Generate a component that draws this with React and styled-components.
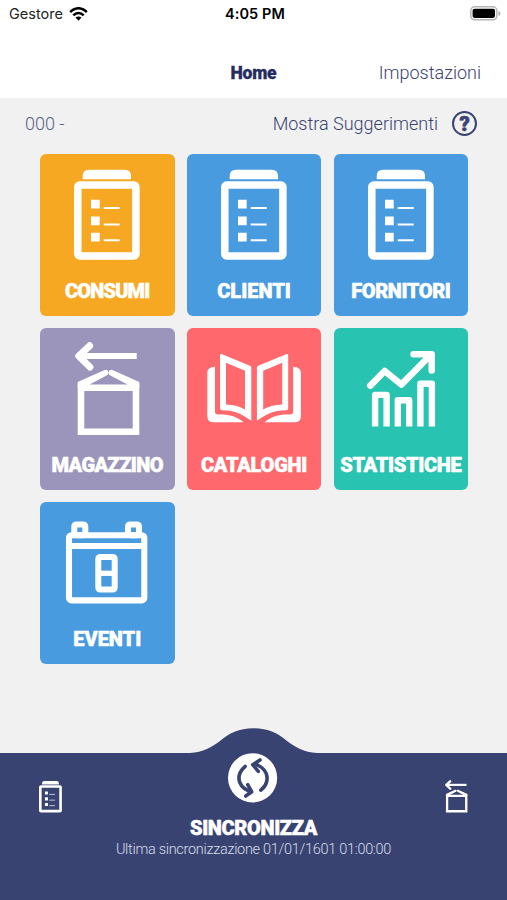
import React from "react";
import styled, { createGlobalStyle } from "styled-components";

const GlobalStyle = createGlobalStyle`
  * {
    box-sizing: border-box;
  }
  body {
    margin: 0;
    background-color: #f1f1f1;
    font-family: Roboto, "Liberation Sans", sans-serif;
  }
`;

const ClipboardIcon = () => (
  <>
    <path d='M42.7 25.3V22q0-6.3 6.3-6.3h35.7q6.3 0 6.3 6.3v3.3z' fill='currentColor' />
    <rect x='37.8' y='31.1' width='58.1' height='70.8' rx='1.8' strokeWidth='7.5' />
    <path d='M51 45.7h8.7v8.7H51zM51 62.4h8.7v8.9H51zM51 78.8h8.7v8.8H51z' fill='currentColor' />
    <path d='M63.7 54h16M63.7 70.5h16M63.7 86.3h16' strokeWidth='2' />
  </>
);

const RoofHalf = () => (
  <path d='M37.7 60V54L64 42.2q3.2-1.2 4.2 1.2t-1.6 4.1L50 56.3V60z' fill='currentColor' />
);

const BoxIcon = () => (
  <>
    <path d='M96.7 28H39' strokeWidth='6.2' />
    <path d='M49.7 17.7L38.7 28L50 39.2' strokeWidth='6.8' strokeLinecap='round' strokeLinejoin='round' />
    <path d='M41 59.7V103.7H96V59.7z' strokeWidth='6.6' />
    <RoofHalf />
    <g transform='translate(137 0) scale(-1 1)'>
      <RoofHalf />
    </g>
  </>
);

const BookHalf = () => (
  <path
    fill='currentColor'
    fillRule='evenodd'
    d='M33 27.5q0-2 2.2-1.3L63 37.8q1.3.6 1.3 2V92.7C55 86.5 49 82.3 35 82.2q-2 0-2-2zM39 34.7V76.6C47 76.7 53 78.6 58 81.5V42.8zM28 38.7q-7.7.6-7.7 6V88q0 6.3 6.3 6.3H56.7C49 87.6 41 86 31 86.5q-3 0-3-3z'
  />
);

const BookIcon = () => (
  <>
    <BookHalf />
    <g transform='translate(134.2 0) scale(-1 1)'>
      <BookHalf />
    </g>
  </>
);

const ChartIcon = () => (
  <>
    <path
      d='M36.3 57.6L50.7 43L67.3 56.6L96.5 27M79.5 26.2H97.7V42.5'
      strokeWidth='6.5'
      strokeLinecap='round'
      strokeLinejoin='round'
    />
    <path
      d='M41.1 98.5V66.9H52.6V98.5M63.8 98.5V72.2H75.2V98.5M86.4 98.5V55.8H97.9V98.5'
      strokeWidth='6.4'
      strokeLinejoin='round'
    />
  </>
);

const CalendarIcon = () => (
  <>
    <rect x='29' y='33.2' width='75.3' height='65.2' rx='2.5' strokeWidth='6.1' />
    <path d='M29 44H104' strokeWidth='5.8' />
    <rect x='34.3' y='22.4' width='11' height='10.8' rx='2' strokeWidth='6' />
    <rect x='88' y='22.4' width='11' height='10.8' rx='2' strokeWidth='6' />
    <rect x='58.3' y='54.9' width='16.4' height='32.7' rx='2' strokeWidth='6' />
    <path d='M58.3 71.3H74.7' strokeWidth='5.3' />
  </>
);

const tiles = [
  { label: "CONSUMI", color: "#f6a822", icon: ClipboardIcon, spacing: -0.85 },
  { label: "CLIENTI", color: "#489bdf", icon: ClipboardIcon, spacing: 0 },
  { label: "FORNITORI", color: "#489bdf", icon: ClipboardIcon, spacing: -0.4 },
  { label: "MAGAZZINO", color: "#9b95bb", icon: BoxIcon, spacing: -0.55 },
  { label: "CATALOGHI", color: "#ff686c", icon: BookIcon, spacing: -0.25 },
  { label: "STATISTICHE", color: "#29c3b1", icon: ChartIcon, spacing: -0.3 },
  { label: "EVENTI", color: "#489bdf", icon: CalendarIcon, spacing: 0 },
];

const App = () => {
  return (
    <>
      <GlobalStyle />
      <Screen>
        <StatusBar>
          <Carrier>
            Gestore
            <svg width='19' height='14' viewBox='0 0 19 14'>
              <g fill='none' stroke='#000' strokeWidth='2.5'>
                <path d='M1.2 5.2C6-.1 13-.1 17.8 5.2' />
                <path d='M4.3 8.4C7.4 5.2 11.6 5.2 14.7 8.4' />
              </g>
              <path d='M6.5 10.6Q9.5 8.2 12.5 10.6L9.5 13.7z' />
            </svg>
          </Carrier>
          <Clock>4:05 PM</Clock>
          <Battery>
            <svg width='31' height='15' viewBox='0 0 31 15'>
              <rect x='.8' y='.8' width='26' height='13' rx='3.8' fill='#fff' stroke='#b5b5b5' strokeWidth='1.5' />
              <rect x='2.6' y='2.7' width='22.4' height='9.2' rx='1.8' />
              <path d='M28.5 5v5q2-.8 2-2.5T28.5 5z' fill='#aaa' />
            </svg>
          </Battery>
        </StatusBar>
        <NavBar>
          <NavTitle>Home</NavTitle>
          <NavLink>Impostazioni</NavLink>
        </NavBar>
        <InfoRow>
          <Code>000 -</Code>
          <Hint>
            Mostra Suggerimenti
            <HelpBadge>?</HelpBadge>
          </Hint>
        </InfoRow>
        <Grid>
          {tiles.map(({ label, color, icon: Icon, spacing }) => (
            <Tile key={label} $color={color}>
              <TileIcon viewBox='0 0 134.5 120'>
                <Icon />
              </TileIcon>
              <TileLabel $spacing={spacing}>{label}</TileLabel>
            </Tile>
          ))}
        </Grid>
        <Footer>
          <svg width='127' height='26' viewBox='0 0 127 26'>
            <path
              d='M0 26C13 25.5 22 20 30 14C39 6 49 1.2 63.5 1.2S88 6 97 14C105 20 114 25.5 127 26z'
              fill='#384372'
            />
          </svg>
          <FooterBar>
            <Shortcut>
              <TileIcon viewBox='34 15.5 66 90.5'>
                <ClipboardIcon />
              </TileIcon>
            </Shortcut>
            <Sync>
              <svg width='50' height='50' viewBox='0 0 50 50'>
                <circle cx='24.6' cy='24.8' r='24.6' fill='#fff' />
                <g fill='none' stroke='#384372' strokeWidth='3.6' strokeLinecap='round' strokeLinejoin='round'>
                  <path d='M17.2 13.3C8.2 20.8 8.5 32.2 20.5 38M19.7 31.7L23.8 38.8L17.7 43' />
                  <path d='M32.8 37.2C41.8 29.7 41.5 17.8 29.5 12M30.3 18.3L24.7 11.7L32 7' />
                </g>
              </svg>
              <SyncTitle>SINCRONIZZA</SyncTitle>
              <SyncDate>Ultima sincronizzazione 01/01/1601 01:00:00</SyncDate>
            </Sync>
            <Shortcut $right>
              <TileIcon viewBox='35 14 66 94'>
                <BoxIcon />
              </TileIcon>
            </Shortcut>
          </FooterBar>
        </Footer>
      </Screen>
    </>
  );
};
export default App;

const Screen = styled.div`
  display: flex;
  flex-direction: column;
  width: 507px;
  height: 900px;
  overflow: hidden;
  white-space: nowrap;
`;

const StatusBar = styled.div`
  display: grid;
  grid-template-columns: 1fr auto 1fr;
  align-items: center;
  height: 27px;
  padding: 0 6px 0 9px;
  background-color: #ffffff;
  color: #000000;
  font-family: Inter, sans-serif;
`;

const Carrier = styled.div`
  display: flex;
  align-items: center;
  gap: 6px;
  font-size: 14.5px;
  color: #222222;
`;

const Clock = styled.div`
  font-size: 14.5px;
  font-weight: 600;
  letter-spacing: 0.1px;
`;

const Battery = styled.div`
  display: flex;
  justify-content: flex-end;
`;

const NavBar = styled.div`
  display: grid;
  grid-template-columns: 1fr auto 1fr;
  align-items: center;
  height: 71px;
  padding: 20px 26px 0;
  background-color: #ffffff;
`;

const NavTitle = styled.div`
  grid-column: 2;
  font-size: 17.5px;
  font-weight: 900;
  letter-spacing: -0.2px;
  color: #252c60;
  -webkit-text-stroke: 0.3px;
`;

const NavLink = styled.div`
  text-align: right;
  font-size: 18px;
  font-weight: 300;
  color: #384372;
`;

const InfoRow = styled.div`
  display: flex;
  align-items: center;
  justify-content: space-between;
  height: 55.5px;
  padding: 0 30px 4px 25px;
  color: #384372;
  font-size: 18px;
  font-weight: 300;
`;

const Code = styled.div`
  color: #5b6288;
`;

const Hint = styled.div`
  display: flex;
  align-items: center;
  gap: 14px;
`;

const HelpBadge = styled.div`
  display: flex;
  align-items: center;
  justify-content: center;
  width: 25px;
  height: 25px;
  border: 2px solid #384372;
  border-radius: 50%;
  font-size: 20px;
  font-weight: 900;
  -webkit-text-stroke: 0.7px;
`;

const Grid = styled.div`
  display: grid;
  grid-template-columns: repeat(3, 134.5px);
  grid-auto-rows: 162px;
  gap: 12.3px;
  padding-left: 40px;
`;

const Tile = styled.div`
  display: flex;
  flex-direction: column;
  align-items: center;
  border-radius: 6px;
  background-color: ${({ $color }) => $color};
  color: #ffffff;
`;

const TileIcon = styled.svg`
  width: 100%;
  fill: none;
  stroke: none;
  color: #ffffff;
  display: block;
  [stroke-width] {
    stroke: currentColor;
  }
`;

const TileLabel = styled.div`
  margin-top: 5px;
  line-height: 24px;
  font-size: 20px;
  font-weight: 900;
  letter-spacing: ${({ $spacing }) => $spacing}px;
  -webkit-text-stroke: 0.5px;
`;

const Footer = styled.div`
  display: flex;
  flex-direction: column;
  align-items: center;
  margin-top: auto;
  svg {
    display: block;
  }
`;

const FooterBar = styled.div`
  display: flex;
  justify-content: space-between;
  width: 100%;
  height: 147px;
  padding: 0 39px;
  background-color: #384372;
`;

const Shortcut = styled.div`
  width: 23px;
  padding-top: ${({ $right }) => ($right ? "27px" : "28px")};
`;

const Sync = styled.div`
  display: flex;
  flex-direction: column;
  align-items: center;
  color: #ffffff;
`;

const SyncTitle = styled.div`
  margin-top: 13px;
  line-height: 24px;
  font-size: 20px;
  font-weight: 900;
  letter-spacing: -0.35px;
  -webkit-text-stroke: 0.5px;
`;

const SyncDate = styled.div`
  line-height: 20px;
  font-size: 14.5px;
  font-weight: 300;
  letter-spacing: -0.3px;
  color: #d9dcea;
`;
